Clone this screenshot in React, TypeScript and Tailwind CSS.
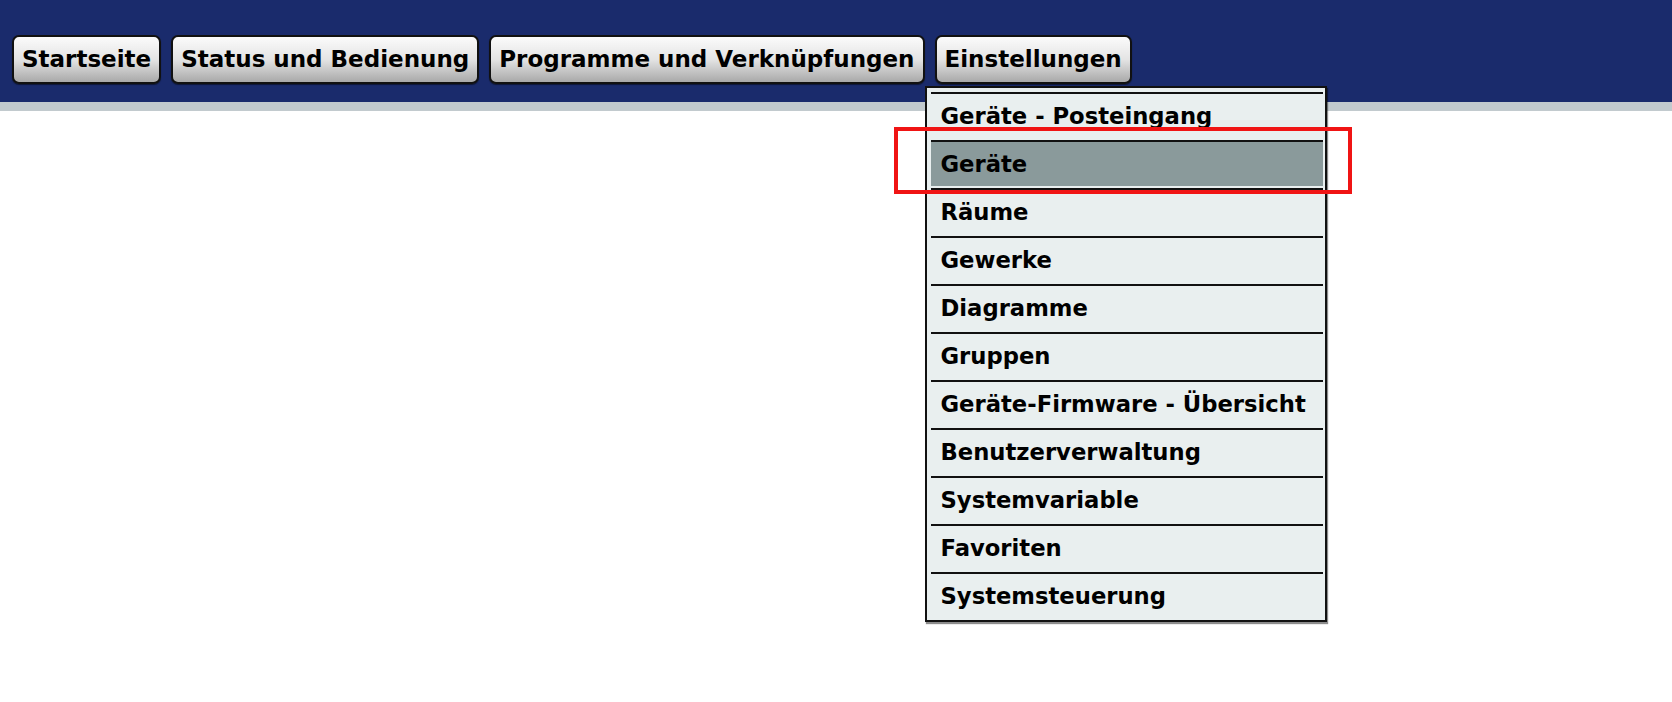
import React from "react"

const navItems = ["Startseite", "Status und Bedienung", "Programme und Verknüpfungen", "Einstellungen"]

const menuItems = [
  "Geräte - Posteingang",
  "Geräte",
  "Räume",
  "Gewerke",
  "Diagramme",
  "Gruppen",
  "Geräte-Firmware - Übersicht",
  "Benutzerverwaltung",
  "Systemvariable",
  "Favoriten",
  "Systemsteuerung",
]

const font = { fontFamily: '"DejaVu Sans", Verdana, sans-serif' }

function NavButton({ label }: { label: string }) {
  return (
    <button className="h-[49px] whitespace-nowrap rounded-[7px] border-2 border-[#111] bg-gradient-to-b from-[#fbfbfb] via-[#e4e4e4] to-[#a9a9a9] px-[8px] text-[23px] font-bold leading-none text-black shadow-[0_1px_1px_rgba(0,0,0,0.5)]">
      {label}
    </button>
  )
}

function SettingsMenu({ selected }: { selected: string }) {
  return (
    <div className="absolute left-[-10px] top-[51px] z-10 w-[402px] border-2 border-[#111] bg-[#e9efef] pl-[4px] pr-[2px] pt-[4px] shadow-[1px_2px_1px_rgba(0,0,0,0.45)]">
      {menuItems.map((item) => (
        <div key={item} className="border-t-2 border-[#111]">
          <div
            className={
              "mb-[2px] flex h-[44px] items-center whitespace-nowrap pl-[10px] text-[22.7px] font-bold leading-none text-black " +
              (item === selected ? "bg-[#8a9a9b]" : "bg-[#e9efef]")
            }
          >
            {item}
          </div>
        </div>
      ))}
    </div>
  )
}

export default function App() {
  return (
    <div className="relative min-h-screen bg-white" style={font}>
      <header className="h-[102px] overflow-hidden bg-[#1a2b6c]">
        <div className="h-[35px] overflow-hidden pl-[80px]">
          <div className="-mt-[40px] text-[44px] font-bold leading-none text-[#2e3f84]">HomeMatic</div>
        </div>
        <nav className="flex gap-[10px] pl-[12px]">
          {navItems.map((item) => (
            <NavButton key={item} label={item} />
          ))}
        </nav>
      </header>
      <div className="h-[9px] bg-[#c2cace]" />

      {/* dropdown of "Einstellungen", anchored under the last tab */}
      <div className="pointer-events-none absolute inset-x-0 top-[35px] flex gap-[10px] pl-[12px]">
        {navItems.map((item) => (
          <div key={item} className="invisible relative">
            <NavButton label={item} />
            {item === "Einstellungen" && (
              <div className="visible">
                <SettingsMenu selected="Geräte" />
              </div>
            )}
          </div>
        ))}
      </div>

      {/* red highlight box */}
      <div className="absolute left-[894px] top-[127px] z-20 h-[67px] w-[458px] border-[4px] border-[#f01414]" />
    </div>
  )
}
